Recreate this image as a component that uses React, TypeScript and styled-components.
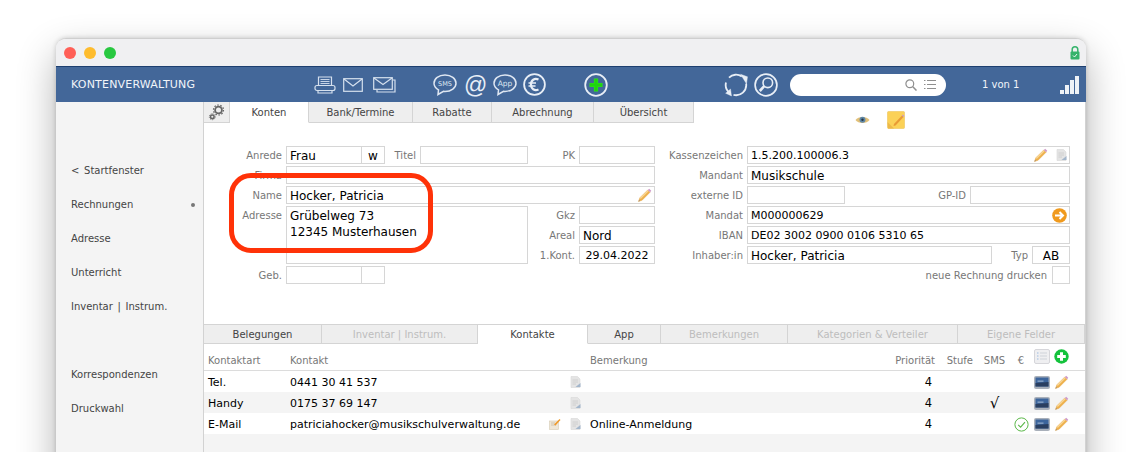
import styled, { createGlobalStyle } from "styled-components";

const GlobalStyles = createGlobalStyle`
  * {
    margin: 0;
    padding: 0;
    box-sizing: border-box;
  }

  body {
    width: 1142px;
    height: 452px;
    overflow: hidden;
    background: #fff;
    font-family: "DejaVu Sans", Verdana, sans-serif;
  }
`

const Pencil = () => (
  <svg width="15" height="15" viewBox="0 0 16 16">
    <path d="M1.5 14.5 L3 10.5 L11.5 2 L14 4.5 L5.5 13 Z" fill="#eeb04a" stroke="#dfa045" strokeWidth=".4" />
    <path d="M3 10.5 L11.5 2 L12.6 3.1 L4 11.7 Z" fill="#f8d595" />
    <path d="M11.5 2 L13 .8 L15.2 3 L14 4.5 Z" fill="#cf9ac8" />
    <path d="M1.5 14.5 L2.2 12.6 L3.4 13.8 Z" fill="#a8927a" />
  </svg>
)

const Doc = () => (
  <svg width="11" height="12" viewBox="0 0 11 12">
    <path d="M1 .5 H7.5 L10 3 V11.5 H1 Z" fill="#e4e4e4" stroke="#d8d8d8" strokeWidth=".6" />
    <path d="M2.5 4 H8 M2.5 6 H8 M2.5 8 H6" stroke="#c9c9c9" strokeWidth=".8" />
    <path d="M5.5 11 L10.5 7 V11 Z" fill="#a3b6cb" />
  </svg>
)

const Screen = () => (
  <svg width="16" height="13" viewBox="0 0 16 13">
    <rect x="0" y="0" width="16" height="13" rx="2" fill="#a9b0ba" />
    <rect x="1.5" y="1.5" width="13" height="9" fill="#3c659c" />
    <path d="M1.5 7 L14.5 6 V10.5 H1.5 Z" fill="#2a3f60" />
    <path d="M3.5 4.5 H9.5 V5.8 H3.5 Z" fill="#8fa9c9" />
  </svg>
)

const PlusCircle = () => (
  <svg width="15" height="15" viewBox="0 0 15 15">
    <circle cx="7.5" cy="7.5" r="7.2" fill="#14c23c" />
    <path d="M7.5 3.2 V11.8 M3.2 7.5 H11.8" stroke="#fff" strokeWidth="3" />
  </svg>
)

const ListDoc = () => (
  <svg width="16" height="15" viewBox="0 0 16 15">
    <rect x=".5" y=".5" width="15" height="14" rx="1.5" fill="#efeff1" stroke="#d6d6da" />
    <path d="M3 4 H4.5 M3 7 H4.5 M3 10 H4.5" stroke="#9dbbe0" strokeWidth="1" />
    <path d="M6 4 H13 M6 7 H13 M6 10 H13" stroke="#cfd3d9" strokeWidth="1" />
  </svg>
)

const CheckCircle = () => (
  <svg width="15" height="15" viewBox="0 0 15 15">
    <circle cx="7.5" cy="7.5" r="6.6" fill="none" stroke="#5cb84a" strokeWidth="1" />
    <path d="M4.2 7.8 L6.6 10.2 L11 5.2" fill="none" stroke="#5cb84a" strokeWidth="1.1" />
  </svg>
)

const MailEdit = () => (
  <svg width="12" height="12" viewBox="0 0 12 12">
    <rect x=".5" y="3" width="9" height="8.5" fill="#efe7d8" stroke="#d6cbb4" strokeWidth=".6" />
    <path d="M2 5 H6 M2 7 H7" stroke="#c9bda6" strokeWidth=".8" />
    <path d="M5 6.5 L10.5 1 L11.5 2 L6.5 7.5 Z" fill="#f09a2a" />
  </svg>
)

function App() {
  const contacts = [
    { art: "Tel.", nr: "0441 30 41 537", note: "", mail: false, sms: false, ok: false },
    { art: "Handy", nr: "0175 37 69 147", note: "", mail: false, sms: true, ok: false },
    { art: "E-Mail", nr: "patriciahocker@musikschulverwaltung.de", note: "Online-Anmeldung", mail: true, sms: false, ok: true },
  ]

  return (
    <>
      <GlobalStyles />

      <Page>
        <Window>

          <TitleBar>
            <Light $c="#ff5f57" />
            <Light $c="#febc2e" />
            <Light $c="#28c840" />
            <Lock>
              <svg width="10" height="14" viewBox="0 0 10 14">
                <path d="M2.2 6 V3.6 a2.8 2.8 0 0 1 5.6 0 V6" fill="none" stroke="#35b36b" strokeWidth="1.5" />
                <rect x=".5" y="5.5" width="9" height="8" rx="1" fill="#35b36b" />
                <path d="M3 9.5 L4.5 11 L7 8" fill="none" stroke="#fff" strokeWidth=".9" />
              </svg>
            </Lock>
          </TitleBar>

          <BlueBar>
            <BarTitle>KONTENVERWALTUNG</BarTitle>

            <BarIcon>
              <svg width="22" height="18" viewBox="0 0 22 18" fill="none" stroke="#d5e0ee" strokeWidth="1.2">
                <path d="M4.5 9 V1 H17.5 V9" />
                <path d="M6.5 3.5 H15.5 M6.5 5.5 H15.5 M6.5 7.5 H15.5" strokeWidth=".9" />
                <rect x="1" y="9.5" width="20" height="5" rx="2" />
                <path d="M4 14.5 V17 H18 V14.5" />
              </svg>
            </BarIcon>
            <BarIcon $ml={7}>
              <svg width="20" height="14" viewBox="0 0 20 14" fill="none" stroke="#d5e0ee" strokeWidth="1.2">
                <rect x=".7" y=".7" width="18.6" height="12.6" />
                <path d="M1 1 L10 8 L19 1" />
              </svg>
            </BarIcon>
            <BarIcon $ml={10}>
              <svg width="23" height="16" viewBox="0 0 23 16" fill="none" stroke="#d5e0ee" strokeWidth="1.2">
                <rect x=".7" y=".7" width="18.6" height="11.6" fill="#436799" />
                <path d="M1 1 L10 7.5 L19 1" />
                <path d="M20 3 H22 V15 H4 V13" />
              </svg>
            </BarIcon>

            <BarIcon $ml={37}>
              <svg width="24" height="22" viewBox="0 0 24 22" fill="none" stroke="#dfe7f2" strokeWidth="1.5">
                <path d="M12 1 C5.8 1 1 4.6 1 9.2 C1 12 2.8 14.3 5.5 15.8 L5 20.5 L10.5 17.3 C11 17.4 11.5 17.4 12 17.4 C18.2 17.4 23 13.8 23 9.2 C23 4.6 18.2 1 12 1 Z" />
                <text x="12" y="11.5" textAnchor="middle" fontSize="6.5" fill="#dfe7f2" stroke="none">SMS</text>
              </svg>
            </BarIcon>
            <BarIcon $ml={7}>
              <AtSign>@</AtSign>
            </BarIcon>
            <BarIcon $ml={7}>
              <svg width="24" height="22" viewBox="0 0 24 22" fill="none" stroke="#dfe7f2" strokeWidth="1.5">
                <path d="M12 1 C5.8 1 1 4.6 1 9.2 C1 12 2.8 14.3 5.5 15.8 L5 20.5 L10.5 17.3 C11 17.4 11.5 17.4 12 17.4 C18.2 17.4 23 13.8 23 9.2 C23 4.6 18.2 1 12 1 Z" />
                <text x="12" y="11.5" textAnchor="middle" fontSize="7.5" fill="#dfe7f2" stroke="none">App</text>
              </svg>
            </BarIcon>
            <BarIcon $ml={6}>
              <svg width="23" height="23" viewBox="0 0 23 23" fill="none" stroke="#e8eef6">
                <circle cx="11.5" cy="11.5" r="10.4" strokeWidth="1.8" />
                <path d="M15.5 6.6 C11.5 4.8 8 7.2 8 11.5 C8 15.8 11.5 18.2 15.5 16.4" strokeWidth="2.2" />
                <path d="M5.5 10 H13 M5.5 13 H12.5" strokeWidth="1.5" />
              </svg>
            </BarIcon>

            <BarIcon $ml={38}>
              <svg width="24" height="24" viewBox="0 0 24 24" fill="none">
                <circle cx="12" cy="12" r="10.8" stroke="#e8eef6" strokeWidth="1.8" />
                <path d="M12 5.5 V18.5 M5.5 12 H18.5" stroke="#2fe81a" strokeWidth="4.2" />
                <path d="M12 6 V18 M6 12 H18" stroke="#1fd40e" strokeWidth="3" />
              </svg>
            </BarIcon>

            <BarIcon $ml={116}>
              <svg width="24" height="24" viewBox="0 0 24 24" fill="none" stroke="#e8eef6" strokeWidth="1.8">
                <path d="M5 4.6 A10.2 10.2 0 0 1 17.8 3.4" />
                <path d="M22.1 10.5 A10.2 10.2 0 0 1 9.5 21.9" />
                <path d="M5.8 20 A10.2 10.2 0 0 1 2 9.5" />
                <path d="M16.5 1.2 L23.5 3.8 L22.5 10.8 Z" fill="#e8eef6" strokeWidth=".4" />
                <path d="M7.5 23 L1.6 20.2 L6.5 16 Z" fill="#e8eef6" strokeWidth=".4" />
              </svg>
            </BarIcon>
            <BarIcon $ml={6}>
              <svg width="24" height="24" viewBox="0 0 24 24" fill="none" stroke="#e8eef6">
                <circle cx="12" cy="12" r="10.9" strokeWidth="1.7" />
                <circle cx="13.8" cy="9.8" r="4.8" strokeWidth="1.6" />
                <path d="M10.2 13.2 L5.8 18" strokeWidth="2.6" />
              </svg>
            </BarIcon>

            <SearchBox>
              <svg width="12" height="12" viewBox="0 0 12 12" fill="none" stroke="#8f8f8f" strokeWidth="1.2">
                <circle cx="4.8" cy="4.8" r="3.9" />
                <path d="M7.8 7.8 L11.5 11.5" strokeWidth="1.5" />
              </svg>
              <svg width="12" height="11" viewBox="0 0 12 11" fill="none" stroke="#8f8f8f" strokeWidth="1.2">
                <path d="M0 1.5 H1.5 M3 1.5 H12 M0 5.5 H1.5 M3 5.5 H12 M0 9.5 H1.5 M3 9.5 H12" />
              </svg>
            </SearchBox>

            <Counter>1 von 1</Counter>

            <Signal>
              <SignalBar $h={4} />
              <SignalBar $h={9} />
              <SignalBar $h={14} />
              <SignalBar $h={18} />
            </Signal>
          </BlueBar>

          <Body>
            <Sidebar>
              <SideItem>&lt; Startfenster</SideItem>
              <SideItem>Rechnungen<SideDot /></SideItem>
              <SideItem>Adresse</SideItem>
              <SideItem>Unterricht</SideItem>
              <SideItem>Inventar | Instrum.</SideItem>
              <SideItem />
              <SideItem>Korrespondenzen</SideItem>
              <SideItem>Druckwahl</SideItem>
            </Sidebar>

            <Main>
              <TopTabs>
                <Tab $w={26}>
                  <svg width="17" height="17" viewBox="0 0 17 17" fill="none" stroke="#666">
                    <circle cx="10.5" cy="6" r="3.4" strokeWidth="1.8" />
                    <circle cx="10.5" cy="6" r="5" strokeWidth="1.2" strokeDasharray="1.6 1.5" />
                    <circle cx="4.3" cy="12.7" r="1.8" strokeWidth="1.5" />
                    <circle cx="4.3" cy="12.7" r="3" strokeWidth=".9" strokeDasharray="1 1" />
                  </svg>
                </Tab>
                <Tab $w={79} $active>Konten</Tab>
                <Tab $w={104}>Bank/Termine</Tab>
                <Tab $w={79}>Rabatte</Tab>
                <Tab $w={102}>Abrechnung</Tab>
                <Tab $w={100}>Übersicht</Tab>

                <TabTools>
                  <svg width="15" height="10" viewBox="0 0 15 10">
                    <path d="M.5 5 C3 1 12 1 14.5 5 C12 9 3 9 .5 5 Z" fill="#e2c078" />
                    <circle cx="7.5" cy="4.8" r="3" fill="#5f87a6" />
                    <circle cx="7.5" cy="4.8" r="1.2" fill="#243645" />
                  </svg>
                  <svg width="18" height="18" viewBox="0 0 18 18">
                    <rect x=".5" y=".5" width="17" height="17" rx="1" fill="#fbd157" stroke="#eec55a" strokeWidth=".6" />
                    <path d="M.5 11 L7 17.5 H1 Z" fill="#edb94a" />
                    <path d="M7 13 L15 4.5 L16.5 6 L8.5 14.5 L6.5 15 Z" fill="#e99a34" />
                    <path d="M15 4.5 L15.8 3.5 L17.3 5 L16.5 6 Z" fill="#c79ad0" />
                  </svg>
                </TabTools>
              </TopTabs>

              <FormArea>
                <FormColumn $w={451}>
                  <Row>
                    <Label $w={82}>Anrede</Label>
                    <Field $w={76}>Frau</Field>
                    <Field $w={24} $center $joined>w</Field>
                    <Label $w={35}>Titel</Label>
                    <Field $w={108} />
                    <Label $w={51}>PK</Label>
                    <Field $w={76} />
                  </Row>
                  <Row>
                    <Label $w={82}>Firma</Label>
                    <Field $w={369} />
                  </Row>
                  <Row>
                    <Label $w={82}>Name</Label>
                    <Field $w={369}>
                      Hocker, Patricia
                      <FieldIcons><Pencil /></FieldIcons>
                    </Field>
                  </Row>
                  <AddressRow>
                    <Label $w={82}>Adresse</Label>
                    <AddressBox>Grübelweg 73<br />12345 Musterhausen</AddressBox>
                    <SideStack>
                      <Row>
                        <Label $w={51}>Gkz</Label>
                        <Field $w={76} />
                      </Row>
                      <Row>
                        <Label $w={51}>Areal</Label>
                        <Field $w={76}>Nord</Field>
                      </Row>
                      <Row>
                        <Label $w={51}>1.Kont.</Label>
                        <Field $w={76} $center $num>29.04.2022</Field>
                      </Row>
                    </SideStack>
                  </AddressRow>
                  <Row>
                    <Label $w={82}>Geb.</Label>
                    <Field $w={76} />
                    <Field $w={24} $joined />
                  </Row>
                </FormColumn>

                <FormColumn $w={415}>
                  <Row>
                    <Label $w={92}>Kassenzeichen</Label>
                    <Field $w={323} $num>
                      1.5.200.100006.3
                      <FieldIcons><Pencil /><Doc /></FieldIcons>
                    </Field>
                  </Row>
                  <Row>
                    <Label $w={92}>Mandant</Label>
                    <Field $w={323}>Musikschule</Field>
                  </Row>
                  <Row>
                    <Label $w={92}>externe ID</Label>
                    <Field $w={98} />
                    <Label $w={125}>GP-ID</Label>
                    <Field $w={100} />
                  </Row>
                  <Row>
                    <Label $w={92}>Mandat</Label>
                    <Field $w={323} $num>
                      M000000629
                      <FieldIcons>
                        <svg width="15" height="15" viewBox="0 0 15 15">
                          <circle cx="7.5" cy="7.5" r="7.3" fill="#f09a1e" />
                          <path d="M3 7.5 H10 M7.5 4 L11 7.5 L7.5 11" fill="none" stroke="#fff" strokeWidth="2" />
                        </svg>
                      </FieldIcons>
                    </Field>
                  </Row>
                  <Row>
                    <Label $w={92}>IBAN</Label>
                    <Field $w={323} $num>DE02 3002 0900 0106 5310 65</Field>
                  </Row>
                  <Row>
                    <Label $w={92}>Inhaber:in</Label>
                    <Field $w={245}>Hocker, Patricia</Field>
                    <Label $w={40}>Typ</Label>
                    <Field $w={38} $center>AB</Field>
                  </Row>
                  <Row>
                    <Label $w={397} $gap={5}>neue Rechnung drucken</Label>
                    <Field $w={18} />
                  </Row>
                </FormColumn>

                <Marker />
              </FormArea>

              <BottomTabs>
                <Tab $w={118}>Belegungen</Tab>
                <Tab $w={156} $off>Inventar | Instrum.</Tab>
                <Tab $w={110} $active>Kontakte</Tab>
                <Tab $w={73}>App</Tab>
                <Tab $w={127} $off>Bemerkungen</Tab>
                <Tab $w={170} $off>Kategorien &amp; Verteiler</Tab>
                <Tab $w={127} $off>Eigene Felder</Tab>
              </BottomTabs>

              <TableHead>
                <span>Kontaktart</span>
                <span>Kontakt</span>
                <span />
                <span />
                <span>Bemerkung</span>
                <RightCell>Priorität</RightCell>
                <RightCell>Stufe</RightCell>
                <CenterCell>SMS</CenterCell>
                <CenterCell>€</CenterCell>
                <HeadIcon $pad={8}><ListDoc /></HeadIcon>
                <HeadIcon $pad={2}><PlusCircle /></HeadIcon>
              </TableHead>

              {contacts.map((c) => (
                <TableRow key={c.art}>
                  <span>{c.art}</span>
                  <span>{c.nr}</span>
                  <IconCell $pad={4}>{c.mail ? <MailEdit /> : null}</IconCell>
                  <IconCell $pad={1}><Doc /></IconCell>
                  <span>{c.note}</span>
                  <PrioCell>4</PrioCell>
                  <span />
                  <CenterCell>{c.sms ? <SmsMark>√</SmsMark> : null}</CenterCell>
                  <CenterCell>{c.ok ? <CheckCircle /> : null}</CenterCell>
                  <IconCell $pad={8}><Screen /></IconCell>
                  <IconCell $pad={2}><Pencil /></IconCell>
                </TableRow>
              ))}
            </Main>
          </Body>

        </Window>
      </Page>
    </>
  )
}

export default App;


const Page = styled.div`
  width: 1142px;
  height: 452px;
  overflow: hidden;
  padding: 38px 56px 0;
`

const Window = styled.div`
  width: 1030px;
  height: 460px;
  display: flex;
  flex-direction: column;
  background: #fff;
  border-radius: 10px 10px 0 0;
  border-top: 1px solid #cfcfcf;
  box-shadow: 0 16px 38px rgba(0, 0, 0, 0.3), 0 0 5px rgba(0, 0, 0, 0.18);
`

const TitleBar = styled.div`
  height: 27px;
  flex-shrink: 0;
  display: flex;
  align-items: center;
  gap: 8px;
  padding: 0 6px 0 8px;
  background: #f0f0f2;
  border-radius: 9px 9px 0 0;
`

const Light = styled.span<{ $c: string }>`
  width: 12px;
  height: 12px;
  border-radius: 50%;
  background: ${(p) => p.$c};
`

const Lock = styled.span`
  margin-left: auto;
  display: flex;
`

const BlueBar = styled.div`
  height: 36px;
  flex-shrink: 0;
  display: flex;
  align-items: center;
  background: #436799;
  border-top: 1px solid #1d3f70;
  color: #fff;
`

const BarTitle = styled.div`
  width: 258px;
  padding-left: 15px;
  font-size: 11px;
  letter-spacing: 0.2px;
  color: #f2f5f9;
`

const BarIcon = styled.span<{ $ml?: number }>`
  display: flex;
  margin-left: ${(p) => p.$ml || 0}px;
`

const AtSign = styled.span`
  width: 22px;
  text-align: center;
  font-family: "Liberation Sans", sans-serif;
  font-size: 23px;
  line-height: 24px;
  color: #e8eef6;
`

const SearchBox = styled.div`
  width: 156px;
  height: 22px;
  margin-left: 12px;
  padding-right: 10px;
  display: flex;
  align-items: center;
  justify-content: flex-end;
  gap: 7px;
  background: #fff;
  border-radius: 11px;
`

const Counter = styled.div`
  width: 38px;
  margin-left: 36px;
  font-size: 10px;
  white-space: nowrap;
  color: #f2f5f9;
`

const Signal = styled.div`
  margin-left: 40px;
  height: 18px;
  display: flex;
  align-items: flex-end;
  gap: 1.5px;
`

const SignalBar = styled.span<{ $h: number }>`
  width: 3.5px;
  height: ${(p) => p.$h}px;
  background: #eef2f7;
`

const Body = styled.div`
  flex: 1;
  display: flex;
  min-height: 0;
`

const Sidebar = styled.div`
  width: 147px;
  flex-shrink: 0;
  padding: 52px 0 0 15px;
  display: flex;
  flex-direction: column;
  background: #f4f4f4;
`

const SideItem = styled.div`
  position: relative;
  height: 34px;
  line-height: 34px;
  font-size: 10px;
  word-spacing: 1.5px;
  color: #444;
`

const SideDot = styled.span`
  position: absolute;
  left: 120px;
  top: 15px;
  width: 4px;
  height: 4px;
  border-radius: 50%;
  background: #777;
`

const Main = styled.div`
  flex: 1;
  display: flex;
  flex-direction: column;
  min-width: 0;
  background: #f4f4f4;
  border-left: 1px solid #d2d2d2;
  border-right: 1px solid #d2d2d2;
`

const TopTabs = styled.div`
  height: 21px;
  flex-shrink: 0;
  display: flex;
  background: #fff;
`

const Tab = styled.div<{ $w: number; $active?: boolean; $off?: boolean }>`
  width: ${(p) => p.$w}px;
  display: flex;
  align-items: center;
  justify-content: center;
  font-size: 10px;
  white-space: nowrap;
  color: ${(p) => (p.$off ? "#bdbdbd" : "#444")};
  background: ${(p) => (p.$active ? "#fff" : "#eeeeee")};
  border-right: 1px solid #d4d4d4;
  border-bottom: 1px solid ${(p) => (p.$active ? "#fff" : "#d4d4d4")};
`

const TabTools = styled.div`
  position: relative;
  z-index: 1;
  margin-left: 161px;
  height: 27px;
  padding-top: 9px;
  display: flex;
  align-items: center;
  gap: 17px;
`

const FormArea = styled.div`
  position: relative;
  height: 201px;
  flex-shrink: 0;
  padding-top: 23px;
  display: flex;
  background: #fff;
`

const FormColumn = styled.div<{ $w: number }>`
  width: ${(p) => p.$w}px;
  display: flex;
  flex-direction: column;
  gap: 2px;
`

const Row = styled.div`
  height: 18px;
  display: flex;
`

const Label = styled.div<{ $w: number; $gap?: number }>`
  width: ${(p) => p.$w}px;
  padding-right: ${(p) => p.$gap || 4}px;
  padding-top: 2px;
  text-align: right;
  font-size: 10px;
  line-height: 16px;
  white-space: nowrap;
  color: #777;
`

const Field = styled.div<{ $w: number; $center?: boolean; $joined?: boolean; $num?: boolean }>`
  position: relative;
  width: ${(p) => p.$w}px;
  height: 18px;
  padding: ${(p) => (p.$center ? "0" : "0 3px")};
  margin-left: ${(p) => (p.$joined ? "-1px" : "0")};
  text-align: ${(p) => (p.$center ? "center" : "left")};
  border: 1px solid #d6d6d6;
  background: #fff;
  font-size: ${(p) => (p.$num ? "11px" : "12px")};
  line-height: 18px;
  white-space: nowrap;
  color: #000;
`

const FieldIcons = styled.span`
  position: absolute;
  right: 2px;
  top: 0;
  height: 16px;
  display: flex;
  align-items: center;
  gap: 8px;
`

const AddressRow = styled.div`
  height: 58px;
  display: flex;
`

const AddressBox = styled.div`
  width: 242px;
  height: 58px;
  padding: 1px 3px 0;
  border: 1px solid #d6d6d6;
  font-size: 12px;
  line-height: 16px;
  color: #000;
`

const SideStack = styled.div`
  display: flex;
  flex-direction: column;
  gap: 2px;
`

const Marker = styled.div`
  position: absolute;
  left: 25px;
  top: 50px;
  width: 204px;
  height: 80px;
  border: 5px solid #ff3208;
  border-radius: 22px;
`

const BottomTabs = styled.div`
  height: 20px;
  flex-shrink: 0;
  display: flex;
  border-top: 1px solid #d4d4d4;
`

const tableColumns = "82px 255px 24px 21px 300px 45px 38px 43px 10px 26px 33px"

const TableHead = styled.div`
  height: 27px;
  flex-shrink: 0;
  display: grid;
  grid-template-columns: ${tableColumns};
  align-items: end;
  padding: 0 0 2px 4px;
  background: #fff;
  border-bottom: 1px solid #dcdcdc;
  font-size: 10px;
  line-height: 14px;
  color: #777;
`

const TableRow = styled.div`
  height: 21px;
  flex-shrink: 0;
  display: grid;
  grid-template-columns: ${tableColumns};
  align-items: center;
  padding: 1px 0 0 4px;
  background: #fff;
  font-size: 11px;
  color: #000;

  &:nth-of-type(even) {
    background: #f4f4f4;
  }
`

const RightCell = styled.span`
  text-align: right;
`

const PrioCell = styled.span`
  text-align: right;
  padding-right: 3px;
  font-size: 11.5px;
`

const CenterCell = styled.span`
  display: flex;
  justify-content: center;
  align-items: center;

  svg {
    flex-shrink: 0;
  }
`

const SmsMark = styled.span`
  font-size: 15px;
  line-height: 16px;
`

const IconCell = styled.span<{ $pad?: number }>`
  display: flex;
  align-items: center;
  padding-left: ${(p) => p.$pad || 0}px;
`

const HeadIcon = styled(IconCell)`
  margin-bottom: 4px;
`
